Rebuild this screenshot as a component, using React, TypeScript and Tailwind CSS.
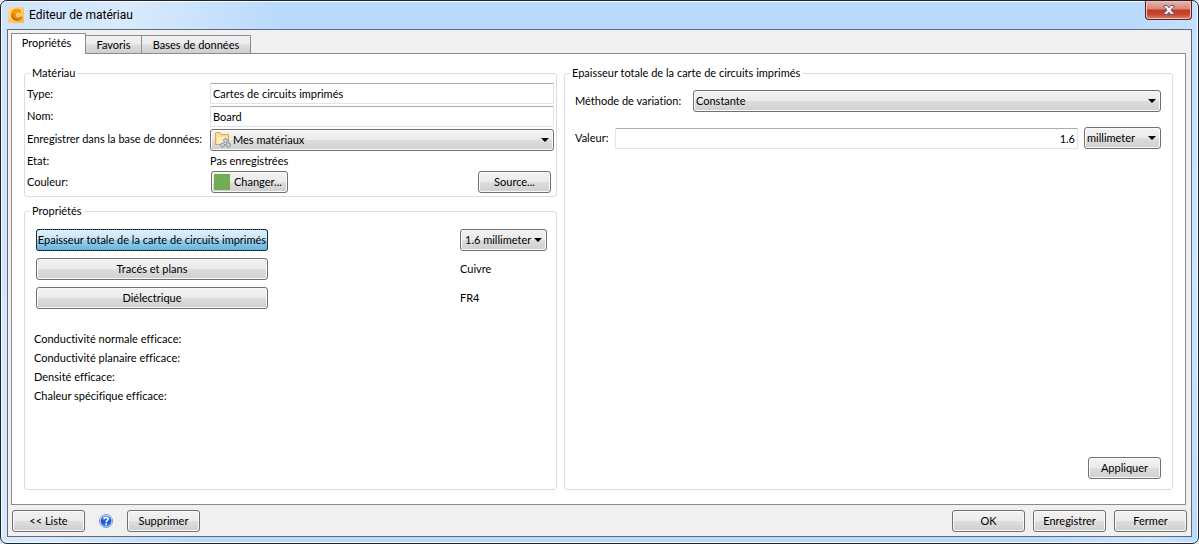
import React, { useState } from "react";

const btn =
  "h-[22px] rounded-[3px] border border-[#707070] bg-[linear-gradient(to_bottom,#f2f2f2_0%,#ebebeb_48%,#dddddd_52%,#cfcfcf_100%)] shadow-[inset_0_0_0_1px_#fafafa] whitespace-nowrap text-center";

function Button({ children, className = "w-[73px]" }: { children: React.ReactNode; className?: string }) {
  return (
    <button type="button" className={`${btn} ${className}`}>
      {children}
    </button>
  );
}

function Select({
  id,
  label,
  options,
  className = "",
  pad = "pl-[2px]",
  icon,
}: {
  id: string;
  label?: string;
  options: string[];
  className?: string;
  pad?: string;
  icon?: React.ReactNode;
}) {
  return (
    <div className={`relative ${className}`}>
      <select id={id} aria-label={label} className={`${btn} block w-full appearance-none text-left ${pad}`}>
        {options.map((o) => (
          <option key={o}>{o}</option>
        ))}
      </select>
      {icon}
      <svg className="pointer-events-none absolute top-[9px] right-[5px]" width="8" height="4" viewBox="0 0 8 4" aria-hidden="true">
        <path d="M0 0h8L4 4z" fill="#000" />
      </svg>
    </div>
  );
}

function Group({ title, className = "", children }: { title: string; className?: string; children: React.ReactNode }) {
  return (
    <fieldset className={`min-w-0 rounded-[3px] border border-[#d5dfe5] ${className}`}>
      <legend className="ml-[5px] h-4 px-[2px]">{title}</legend>
      {children}
    </fieldset>
  );
}

const field =
  "h-[21px] min-w-0 rounded-[1px] border border-[#e2e3ea] border-t-[#abadb3] bg-white px-[2px] outline-none";

function AppIcon() {
  return (
    <svg width="16" height="16" viewBox="0 0 16 16" aria-hidden="true">
      <defs>
        <linearGradient id="app" x1="0" y1="0" x2="1" y2="1">
          <stop offset="0" stopColor="#ffe0a0" />
          <stop offset="1" stopColor="#fbb840" />
        </linearGradient>
      </defs>
      <rect width="16" height="16" fill="url(#app)" />
      <path d="M13 6V3.500L11 2C6 1 3 3.500 3 8l2 4.500L8 9C7 6 10 4.500 13 6z" fill="#f09a10" />
      <path d="M3 7.500C3 12 7 14.800 12.500 13V10C10 11.300 7.500 10.500 7 8L5.500 6z" fill="#dd8308" />
      <path d="M12.500 10v3l1.300-1V9.300zM3 7.500C3.500 12.500 7.500 15 12.500 13 8 13 5 11.500 3 7.500z" fill="#b9680a" />
    </svg>
  );
}

function FolderIcon() {
  return (
    <svg className="pointer-events-none absolute top-[3px] left-[5px]" width="16" height="16" viewBox="0 0 16 16" aria-hidden="true">
      <path d="M.5 12.500V1.500Q.5.500 1.500.500H5l1.500 2h7v10z" fill="#fbdc8c" stroke="#d9a947" />
      <path d="M2 5h10.500v6.500H2z" fill="#ffeebb" />
      <g fill="#c3d6e6" stroke="#6689aa" strokeWidth=".8">
        <circle cx="10.500" cy="8.500" r="2" />
        <circle cx="7.500" cy="13" r="2" />
        <circle cx="13.300" cy="13" r="2.200" />
      </g>
    </svg>
  );
}

function HelpIcon() {
  return (
    <svg width="14" height="14" viewBox="0 0 14 14" aria-hidden="true">
      <defs>
        <linearGradient id="help" x1="0" y1="0" x2="0" y2="1">
          <stop offset="0" stopColor="#5f9bf2" />
          <stop offset=".5" stopColor="#1a4fd0" />
          <stop offset="1" stopColor="#3f86ee" />
        </linearGradient>
      </defs>
      <circle cx="7" cy="7" r="6.500" fill="#fff" stroke="#6f97cc" />
      <circle cx="7" cy="7" r="5.500" fill="url(#help)" />
      <path d="M5 5.300C5 2.800 9.300 2.900 9.100 5.200 9 6.600 7.100 6.700 7.100 8.300" fill="none" stroke="#fff" strokeWidth="1.600" />
      <circle cx="7.100" cy="10.300" r="1" fill="#fff" />
    </svg>
  );
}

function CloseIcon() {
  return (
    <svg width="12" height="10" viewBox="0 0 12 10" aria-hidden="true">
      <path
        d="M1 .5h3L6 2.800 8 .5h3v1L8 5l3 3.500v1H8L6 7.200 4 9.500H1v-1L4 5 1 1.500z"
        fill="#f4f4f4"
        stroke="#565c72"
        strokeWidth="1"
      />
    </svg>
  );
}

const tabs = [
  { name: "Propriétés", width: "w-[75px]" },
  { name: "Favoris", width: "w-[56px]" },
  { name: "Bases de données", width: "w-[109px]" },
];
const parts = [
  { name: "Epaisseur totale de la carte de circuits imprimés" },
  { name: "Tracés et plans", value: "Cuivre" },
  { name: "Diélectrique", value: "FR4" },
];
const effective = [
  "Conductivité normale efficace:",
  "Conductivité planaire efficace:",
  "Densité efficace:",
  "Chaleur spécifique efficace:",
];

export default function App() {
  const [tab, setTab] = useState(0);
  return (
    <div className="bg-[#dfe6ee]">
      <main className="flex min-h-screen flex-col rounded-[7px] border border-[#1f2430] bg-[linear-gradient(100deg,#cfe4fb_0%,#d9eafc_10%,#b9dafd_22%,#b9dafd_88%,#cfe5fe_96%,#b9dafd_100%)] px-[6px] pb-[6px] font-[Lato,sans-serif] [font-variant-ligatures:none] text-[11px] leading-4 text-black shadow-[inset_0_0_0_1px_#f4faff]">
        <header className="flex h-7 items-start justify-between pl-[1px]">
          <div className="flex h-7 items-center gap-[5px]">
            <AppIcon />
            <h1 className="font-[Roboto,sans-serif] text-[12px]">Editeur de matériau</h1>
          </div>
          <button
            type="button"
            aria-label="Fermer la fenêtre"
            className="flex h-[19px] w-[47px] items-center justify-center rounded-b-[4px] border border-t-0 border-[#5a1d1d] bg-[linear-gradient(to_bottom,#eab5ab_0%,#d98479_45%,#bf3a25_50%,#c9472f_75%,#dd8468_100%)] shadow-[inset_0_0_0_1px_#f0c4bb]"
          >
            <CloseIcon />
          </button>
        </header>

        <div className="flex flex-1 flex-col border border-[#5f6b78] bg-[#f0f0f0] px-[3px]">
          <div role="tablist" className="flex h-[23px] items-end">
            {tabs.map((t, i) => (
              <button
                key={t.name}
                type="button"
                role="tab"
                aria-selected={i === tab}
                onClick={() => setTab(i)}
                className={
                  i === tab
                    ? `${t.width} relative -mb-px h-[21px] border border-b-0 border-[#898c95] bg-white pr-1 pb-[2px]`
                    : `${t.width} h-[18px] border border-b-0 border-[#898c95] bg-[linear-gradient(to_bottom,#f2f2f2_0%,#ebebeb_48%,#dddddd_52%,#cfcfcf_100%)] not-first:border-l-0`
                }
              >
                {t.name}
              </button>
            ))}
          </div>

          <div className="mr-[2px] grid flex-1 grid-cols-[533fr_609fr] gap-[7px] border border-[#898c95] bg-white px-3 pt-[11px] pb-[14px]">
            <div className="flex flex-col gap-[6px]">
              <Group title="Matériau">
                <div className="grid grid-cols-[183px_1fr] items-center pt-[2px] pr-[2px] pb-[3px] pl-[2px]">
                  <label htmlFor="type">Type:</label>
                  <input id="type" className={field} defaultValue="Cartes de circuits imprimés" />
                  <label htmlFor="nom">Nom:</label>
                  <input id="nom" className={`mt-[2px] ${field}`} defaultValue="Board" />
                  <label htmlFor="base" className="whitespace-nowrap">
                    Enregistrer dans la base de données:
                  </label>
                  <Select id="base" className="mt-[2px]" pad="pl-[22px]" options={["Mes matériaux"]} icon={<FolderIcon />} />
                  <span className="py-[2px]">Etat:</span>
                  <span>Pas enregistrées</span>
                  <span>Couleur:</span>
                  <div className="flex justify-between pr-[3px] pl-[1px]">
                    <button type="button" className={`${btn} flex w-[77px] items-center gap-1 pl-[2px]`}>
                      <span className="size-4 bg-[#72ad55]" />
                      Changer...
                    </button>
                    <Button>Source...</Button>
                  </div>
                </div>
              </Group>

              <Group title="Propriétés" className="flex-1">
                <div className="grid grid-cols-[232px_1fr] items-center gap-y-[7px] pt-[10px] pr-[9px] pl-[11px]">
                  {parts.map((p, i) => (
                    <React.Fragment key={p.name}>
                      {i === 0 ? (
                        <button
                          type="button"
                          className="h-[22px] rounded-[3px] border border-[#2c628b] bg-[linear-gradient(to_bottom,#e0f1fa_0%,#c4e5f6_48%,#98d1ef_52%,#68b3db_100%)] whitespace-nowrap outline-1 -outline-offset-1 outline-dotted outline-black"
                        >
                          {p.name}
                        </button>
                      ) : (
                        <Button className="w-full">{p.name}</Button>
                      )}
                      {p.value ? (
                        <span className="w-[87px] justify-self-end">{p.value}</span>
                      ) : (
                        <Select id="ep" label={p.name} className="w-[87px] justify-self-end" pad="pl-[4px]" options={["1.6 millimeter"]} />
                      )}
                    </React.Fragment>
                  ))}
                </div>
                <ul className="mt-[22px] flex flex-col gap-[3px] pl-[9px]">
                  {effective.map((e) => (
                    <li key={e}>{e}</li>
                  ))}
                </ul>
              </Group>
            </div>

            <Group title="Epaisseur totale de la carte de circuits imprimés">
              <div className="flex h-full flex-col pt-[9px] pr-[11px] pl-[10px]">
                <div className="flex items-center">
                  <label htmlFor="methode" className="w-[118px] whitespace-nowrap">
                    Méthode de variation:
                  </label>
                  <Select id="methode" className="flex-1" options={["Constante"]} />
                </div>
                <div className="mt-[15px] flex items-center">
                  <label htmlFor="valeur" className="w-10">
                    Valeur:
                  </label>
                  <input id="valeur" className={`flex-1 text-right ${field}`} defaultValue="1.6" />
                  <Select id="unite" label="Unité" className="ml-[6px] w-[77px]" options={["millimeter"]} />
                </div>
                <div className="mt-auto flex justify-end pb-[10px]">
                  <Button>Appliquer</Button>
                </div>
              </div>
            </Group>
          </div>

          <footer className="flex items-center px-[1px] pt-[5px] pb-1">
            <Button>&lt;&lt; Liste</Button>
            <button type="button" aria-label="Aide" className="mx-[14px]">
              <HelpIcon />
            </button>
            <Button>Supprimer</Button>
            <div className="ml-auto flex gap-2">
              <Button>OK</Button>
              <Button>Enregistrer</Button>
              <Button>Fermer</Button>
            </div>
          </footer>
        </div>
      </main>
    </div>
  );
}
